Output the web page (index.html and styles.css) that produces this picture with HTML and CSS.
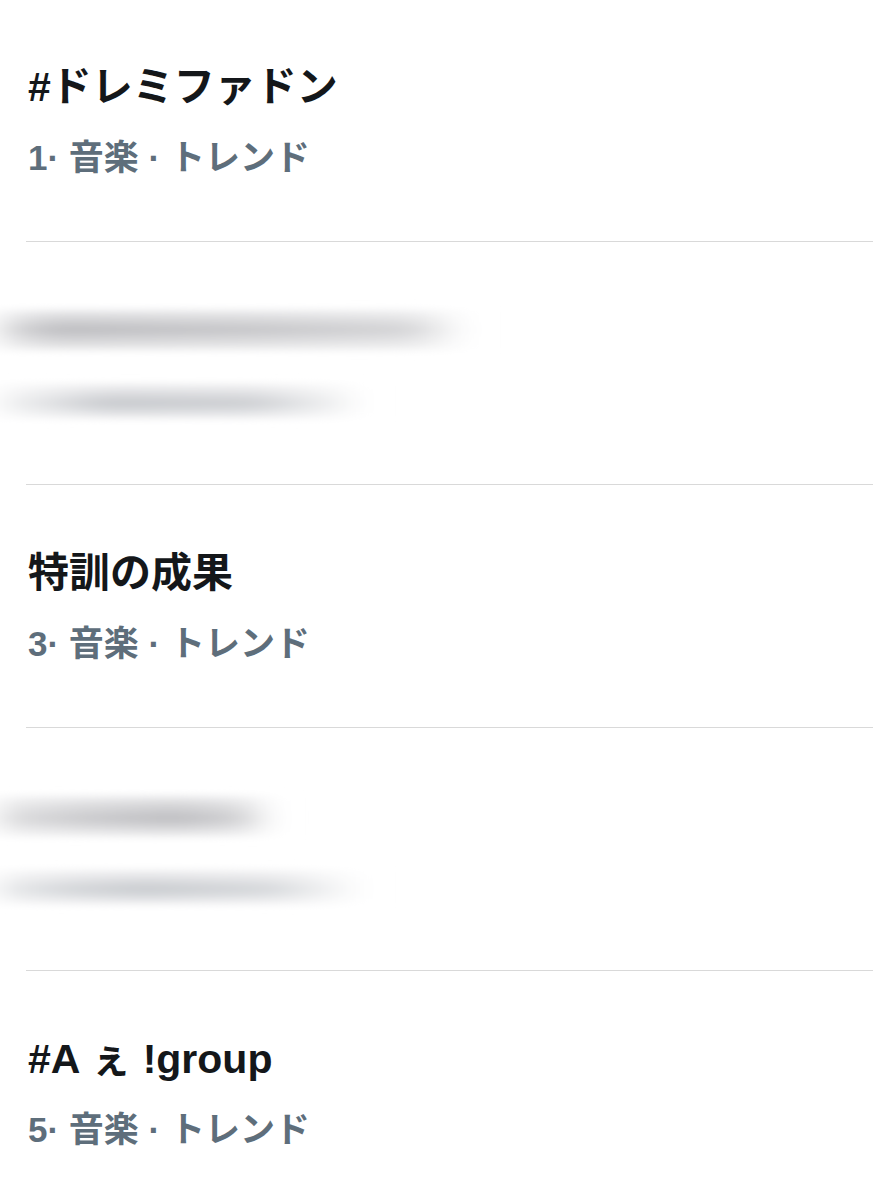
FILE: index.html
```html
<!DOCTYPE html>
<html lang="ja">
<head>
    <meta charset="UTF-8">
    <meta name="viewport" content="width=device-width, initial-scale=1.0">
    <title>トレンド</title>
    <link rel="stylesheet" href="styles.css">
</head>
<body>
    <!-- horizontal smear used for the hidden trends -->
    <svg class="defs" width="0" height="0" aria-hidden="true">
        <filter id="streak" x="-20%" y="-60%" width="140%" height="220%">
            <feGaussianBlur stdDeviation="16 3"/>
        </filter>
    </svg>

    <div class="trend-list">
        <div class="trend-item first">
            <div class="trend-title">#ドレミファドン</div>
            <div class="trend-meta">1·&nbsp;音楽&nbsp;·&nbsp;トレンド</div>
        </div>

        <div class="trend-item">
            <div class="blur-line">
                <div class="smear smear-a"></div>
            </div>
            <div class="blur-line meta-line">
                <div class="smear smear-b"></div>
            </div>
        </div>

        <div class="trend-item">
            <div class="trend-title">特訓の成果</div>
            <div class="trend-meta">3·&nbsp;音楽&nbsp;·&nbsp;トレンド</div>
        </div>

        <div class="trend-item">
            <div class="blur-line">
                <div class="smear smear-c"></div>
            </div>
            <div class="blur-line meta-line">
                <div class="smear smear-d"></div>
            </div>
        </div>

        <div class="trend-item last">
            <div class="trend-title">#A ぇ !group</div>
            <div class="trend-meta">5·&nbsp;音楽&nbsp;·&nbsp;トレンド</div>
        </div>
    </div>
</body>
</html>
```

FILE: styles.css
```css
body {
    margin: 0;
    background: #ffffff;
    font-family: "Liberation Sans", "Noto Sans CJK JP", sans-serif;
    overflow: hidden;
}
.defs {
    position: absolute;
}
.trend-list {
    padding-left: 26px;
}
.trend-item {
    height: 243px;
    box-sizing: border-box;
    padding: 64px 0 0 2px;
    border-bottom: 1px solid #d9d9d9;
}
.trend-item.first {
    margin-top: -1px;
}
.trend-item.last {
    border-bottom: none;
}
.trend-title {
    font-size: 41px;
    line-height: 48px;
    font-weight: bold;
    color: #14171a;
    white-space: nowrap;
}
.trend-meta {
    margin-top: 27px;
    font-size: 35px;
    line-height: 40px;
    font-weight: bold;
    color: #5e6e7b;
    white-space: nowrap;
}
.blur-line {
    margin-left: -28px;
    height: 48px;
    display: flex;
    align-items: center;
}
.blur-line.meta-line {
    margin-top: 27px;
    height: 40px;
}
.smear {
    height: 46px;
    filter: url(#streak);
}
.smear-a {
    width: 465px;
    background:
        linear-gradient(90deg, rgba(255,255,255,0.5) 0%, rgba(255,255,255,0) 12%, rgba(255,255,255,0.15) 55%, rgba(255,255,255,0.35) 88%, rgba(255,255,255,1) 100%),
        linear-gradient(180deg, rgba(255,255,255,0) 0%, #e6e6e8 12%, #d4d4d6 26%, #c8c8cb 38%, #bdbdc0 50%, #cbcbce 62%, #d6d6d8 74%, #e8e8e9 88%, rgba(255,255,255,0) 100%);
}
.smear-b {
    width: 360px;
    height: 40px;
    background:
        linear-gradient(90deg, rgba(255,255,255,0.8) 0%, rgba(255,255,255,0.4) 15%, rgba(255,255,255,0) 30%, rgba(255,255,255,0.1) 70%, rgba(255,255,255,0.7) 92%, rgba(255,255,255,1) 100%),
        linear-gradient(180deg, rgba(255,255,255,0) 0%, #ebebed 15%, #d8d9dc 35%, #c7c9cd 55%, #d6d8db 72%, #ebebed 88%, rgba(255,255,255,0) 100%);
}
.smear-c {
    width: 270px;
    background:
        linear-gradient(90deg, rgba(255,255,255,0.5) 0%, rgba(255,255,255,0.2) 30%, rgba(255,255,255,0) 65%, rgba(255,255,255,0.3) 90%, rgba(255,255,255,1) 100%),
        linear-gradient(180deg, rgba(255,255,255,0) 0%, #e7e7e9 12%, #d3d3d5 28%, #c8c8cb 42%, #bebec1 55%, #cbcbce 68%, #dcdcde 80%, #ededee 92%, rgba(255,255,255,0) 100%);
}
.smear-d {
    width: 360px;
    height: 40px;
    background:
        linear-gradient(90deg, rgba(255,255,255,0.6) 0%, rgba(255,255,255,0.2) 20%, rgba(255,255,255,0) 40%, rgba(255,255,255,0.25) 75%, rgba(255,255,255,1) 100%),
        linear-gradient(180deg, rgba(255,255,255,0) 0%, #ececee 15%, #d9dadd 35%, #c8cbcf 55%, #d7d9dc 72%, #ececee 88%, rgba(255,255,255,0) 100%);
}
```
